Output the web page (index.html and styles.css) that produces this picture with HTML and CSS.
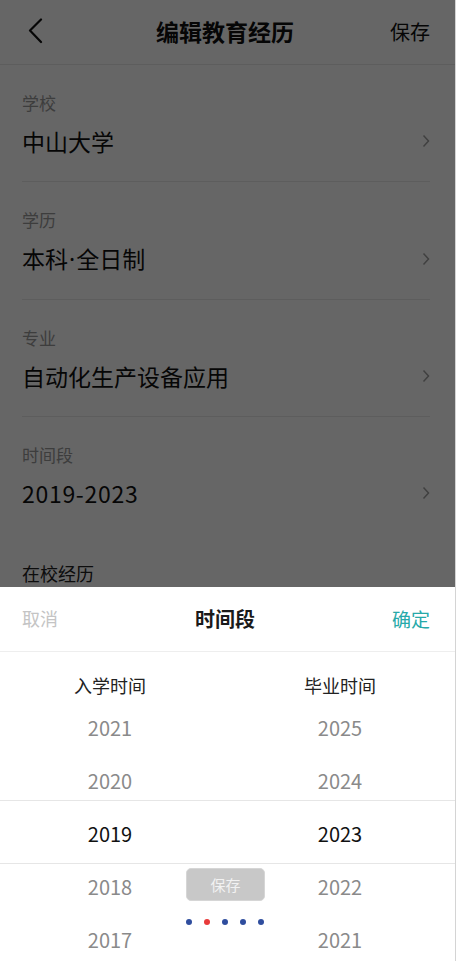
FILE: index.html
```html
<!DOCTYPE html>
<html lang="zh-CN">
<head>
  <meta charset="UTF-8" />
  <meta name="viewport" content="width=device-width, initial-scale=1.0"/>
  <title>编辑教育经历</title>
  <link rel="stylesheet" href="styles.css">
</head>
<body>
  <div class="page">
    <div class="nav">
      <svg class="back" width="16" height="26" viewBox="0 0 16 26">
        <polyline points="13,1.5 2,12.5 13,24" fill="none" stroke="#111" stroke-width="2.2" stroke-linecap="round" stroke-linejoin="round"/>
      </svg>
      <div class="nav-title">编辑教育经历</div>
      <div class="nav-save">保存</div>
    </div>

    <div class="form">
      <div class="field">
        <div class="label">学校</div>
        <div class="value">中山大学
          <svg class="arrow" width="8" height="14" viewBox="0 0 8 14"><polyline points="1.5,1.5 6.5,7 1.5,12.5" fill="none" stroke="#a0a0a0" stroke-width="1.5"/></svg>
        </div>
      </div>
      <div class="field">
        <div class="label">学历</div>
        <div class="value"><span>本科<span class="mid">·</span>全日制</span>
          <svg class="arrow" width="8" height="14" viewBox="0 0 8 14"><polyline points="1.5,1.5 6.5,7 1.5,12.5" fill="none" stroke="#a0a0a0" stroke-width="1.5"/></svg>
        </div>
      </div>
      <div class="field">
        <div class="label">专业</div>
        <div class="value">自动化生产设备应用
          <svg class="arrow" width="8" height="14" viewBox="0 0 8 14"><polyline points="1.5,1.5 6.5,7 1.5,12.5" fill="none" stroke="#a0a0a0" stroke-width="1.5"/></svg>
        </div>
      </div>
      <div class="field last">
        <div class="label">时间段</div>
        <div class="value"><span class="num">2019-2023</span>
          <svg class="arrow" width="8" height="14" viewBox="0 0 8 14"><polyline points="1.5,1.5 6.5,7 1.5,12.5" fill="none" stroke="#a0a0a0" stroke-width="1.5"/></svg>
        </div>
      </div>
      <div class="section-title">在校经历</div>
    </div>

    <div class="mask"></div>

    <div class="sheet">
      <div class="sheet-head">
        <span class="cancel">取消</span>
        <span class="sheet-title">时间段</span>
        <span class="confirm">确定</span>
      </div>
      <div class="picker">
        <div class="col">
          <div class="col-title">入学时间</div>
          <div class="year">2021</div>
          <div class="year">2020</div>
          <div class="year active">2019</div>
          <div class="year">2018</div>
          <div class="year">2017</div>
        </div>
        <div class="col">
          <div class="col-title">毕业时间</div>
          <div class="year">2025</div>
          <div class="year">2024</div>
          <div class="year active">2023</div>
          <div class="year">2022</div>
          <div class="year">2021</div>
        </div>
        <div class="band"></div>
      </div>

      <div class="toast-btn">保存</div>
      <div class="dots">
        <span class="dot"></span>
        <span class="dot red"></span>
        <span class="dot"></span>
        <span class="dot"></span>
        <span class="dot"></span>
      </div>
    </div>
  </div>
</body>
</html>
```

FILE: styles.css
```css
:root {
  --text: #111;
  --muted: #999;
  --line: #e8e8e8;
  --accent: #26a9a9;
  --year: #8a8a8a;
}

* {
  box-sizing: border-box;
}

body {
  margin: 0;
  font-family: "Noto Sans CJK SC", "Noto Sans", sans-serif;
  color: var(--text);
  background: #fff;
}

.page {
  position: relative;
  width: 456px;
  height: 961px;
  overflow: hidden;
  background: #fff;
  border-right: 1px solid #d4d4d4;
}

.nav {
  height: 65px;
  display: flex;
  align-items: center;
  justify-content: space-between;
  padding: 0 25px 2px 28px;
  border-bottom: 1px solid var(--line);
}

.back {
  display: block;
}

.nav-title {
  font-size: 23px;
  font-weight: 600;
  margin-left: 16px;
}

.nav-save {
  font-size: 20px;
}

.form {
  padding: 0 25px 0 22px;
}

.field {
  padding: 26px 0 24px;
  border-bottom: 1px solid var(--line);
}

.field.last {
  border-bottom: none;
}

.label {
  font-size: 17px;
  line-height: 24px;
  color: var(--muted);
}

.value {
  margin-top: 10px;
  font-size: 23px;
  line-height: 32px;
  display: flex;
  align-items: center;
  justify-content: space-between;
}

.mid {
  font-family: "Noto Sans", sans-serif;
  margin: 0 1px;
}

.num {
  letter-spacing: 0.7px;
}

.section-title {
  padding-top: 28px;
  font-size: 18px;
  line-height: 24px;
  color: #222;
}

.mask {
  position: absolute;
  inset: 0;
  background: rgba(0, 0, 0, 0.6);
}

.sheet {
  position: absolute;
  left: 0;
  top: 587px;
  width: 456px;
  bottom: 0;
  background: #fff;
  border-right: 1px solid #8c8c8c;
}

.sheet-head {
  height: 65px;
  display: flex;
  align-items: center;
  justify-content: space-between;
  padding: 0 25px 2px 22px;
  border-bottom: 1px solid #eee;
}

.cancel {
  font-size: 18px;
  color: #c4c4c4;
}

.sheet-title {
  font-size: 20px;
  font-weight: 600;
  color: #1a1a1a;
}

.confirm {
  font-size: 19px;
  color: var(--accent);
}

.picker {
  position: relative;
  display: grid;
  grid-template-columns: 220px 220px;
  column-gap: 10px;
  padding-top: 21px;
}

.col {
  text-align: center;
}

.col-title {
  font-size: 18px;
  line-height: 24px;
  margin-bottom: 4px;
  color: #222;
}

.year {
  height: 53px;
  line-height: 53px;
  font-size: 20px;
  color: var(--year);
}

.year.active {
  color: var(--text);
}

.band {
  position: absolute;
  left: 0;
  right: 0;
  top: 148px;
  height: 64px;
  border-top: 1px solid #e6e6e6;
  border-bottom: 1px solid #e6e6e6;
  pointer-events: none;
}

.toast-btn {
  position: absolute;
  left: 186px;
  top: 281px;
  width: 79px;
  height: 33px;
  border-radius: 5px;
  background: #c8c8c8;
  border: 1px solid #d6d6d6;
  color: #f2f2f2;
  font-size: 15px;
  line-height: 31px;
  text-align: center;
}

.dots {
  position: absolute;
  left: 186px;
  top: 332px;
  display: flex;
  gap: 12px;
}

.dot {
  width: 6px;
  height: 6px;
  border-radius: 50%;
  background: #2f4d9e;
}

.dot.red {
  background: #e83a3a;
}
```
